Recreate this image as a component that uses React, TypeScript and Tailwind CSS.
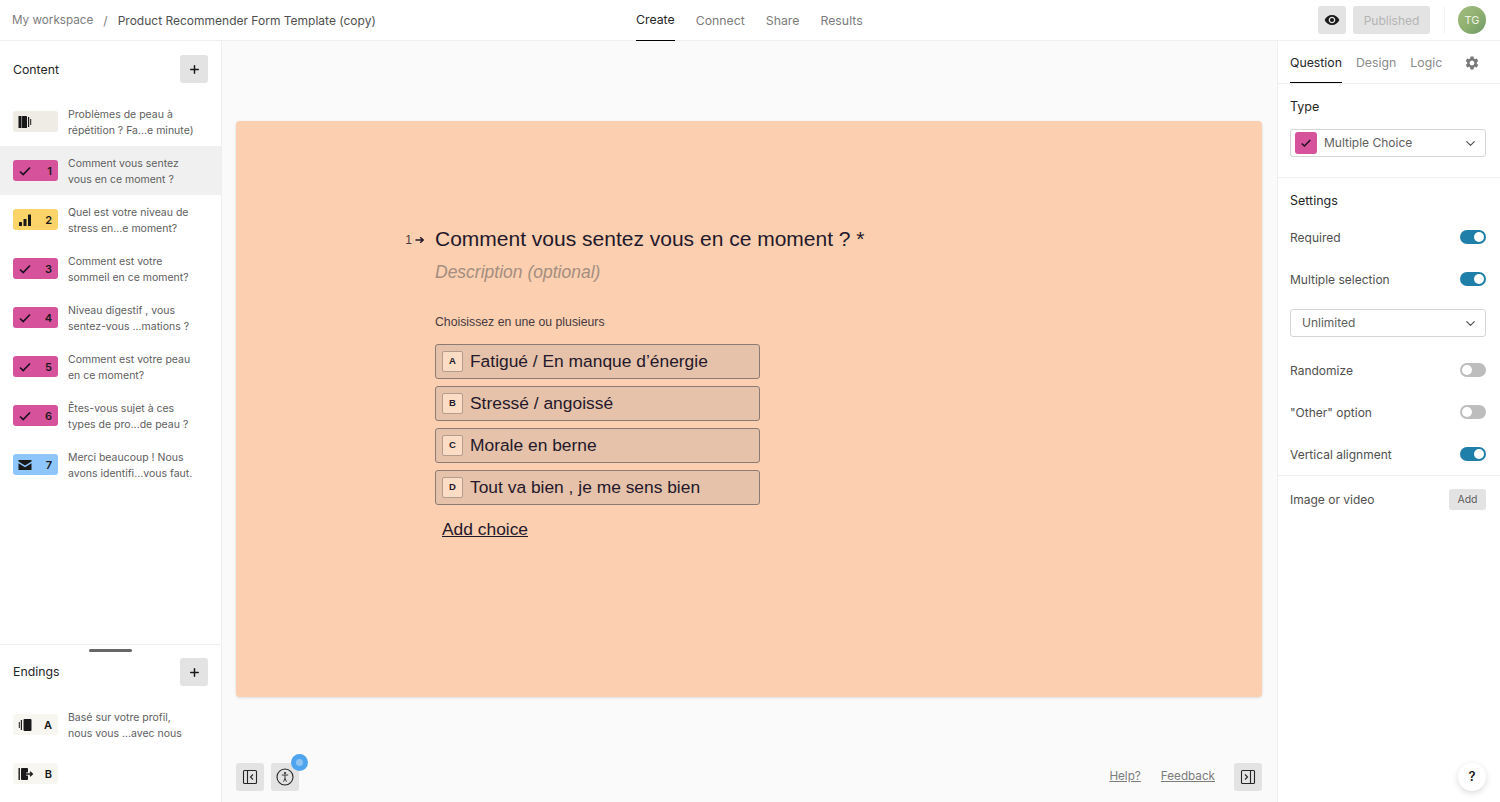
import React from "react";
import { ChevronDown, Plus } from "lucide-react";
import { MdSettings, MdVisibility } from "react-icons/md";

const CheckIcon = ({ className = "w-[14px] h-[14px]" }: { className?: string }) => (
  <svg viewBox="0 0 14 14" className={className} fill="none" stroke="#1c1020" strokeWidth="1.7">
    <path d="M2 7.5l3.2 3L12 3.5" />
  </svg>
);

const BarsIcon = () => (
  <svg viewBox="0 0 14 14" className="w-[14px] h-[14px]" fill="#191919">
    <rect x="1" y="9" width="3" height="4" rx="0.5" />
    <rect x="5.5" y="6" width="3" height="7" rx="0.5" />
    <rect x="10" y="1.5" width="3" height="11.5" rx="0.5" />
  </svg>
);

const MailIcon = () => (
  <svg viewBox="0 0 14 14" className="w-[14px] h-[14px]" fill="#191919">
    <path d="M0.5 2h13v1.4L7 7.4 0.5 3.4z" />
    <path d="M0.5 5.2L7 9.2l6.5-4V12h-13z" />
  </svg>
);

const WelcomeIcon = () => (
  <svg viewBox="0 0 14 14" className="w-[14px] h-[14px]" fill="#191919">
    <rect x="0.5" y="1" width="3" height="12" />
    <rect x="4" y="1" width="5" height="12" rx="0.6" />
    <rect x="10" y="2" width="1.2" height="10" />
    <rect x="12.2" y="4" width="1" height="6" />
  </svg>
);

const EndingAIcon = () => (
  <svg viewBox="0 0 14 14" className="w-[14px] h-[14px]" fill="#191919">
    <rect x="0.8" y="4" width="1" height="6" />
    <rect x="2.8" y="2" width="1.2" height="10" />
    <rect x="5.5" y="1" width="8" height="12" rx="1" />
  </svg>
);

const EndingBIcon = () => (
  <svg viewBox="0 0 16 14" className="w-[16px] h-[14px]" fill="#191919">
    <rect x="0.5" y="1" width="1.4" height="12" />
    <rect x="3" y="1" width="7" height="12" rx="1" />
    <path d="M8 7h6M12 4.8L14.4 7 12 9.2" fill="none" stroke="#f8f6f0" strokeWidth="3" />
    <path d="M8 7h6M12 4.8L14.4 7 12 9.2" fill="none" stroke="#191919" strokeWidth="1.3" />
  </svg>
);

const PanelLeftIcon = () => (
  <svg viewBox="0 0 16 16" className="w-4 h-4" fill="none" stroke="#262627" strokeWidth="1.1">
    <rect x="1.5" y="1.5" width="13" height="13" rx="1" />
    <path d="M5.5 1.5v13M11 5.5L8.5 8l2.5 2.5" />
  </svg>
);

const PanelRightIcon = () => (
  <svg viewBox="0 0 16 16" className="w-4 h-4" fill="none" stroke="#262627" strokeWidth="1.1">
    <rect x="1.5" y="1.5" width="13" height="13" rx="1" />
    <path d="M10.5 1.5v13M5 5.5L7.5 8 5 10.5" />
  </svg>
);

const AccessIcon = () => (
  <svg viewBox="0 0 18 18" className="w-[18px] h-[18px]" fill="none" stroke="#262627">
    <circle cx="9" cy="9" r="8" strokeWidth="1.1" />
    <circle cx="9" cy="5" r="1.1" fill="#262627" stroke="none" />
    <path d="M5.8 7h6.4M9 7v3.5M9 10.5l-1.5 3.2M9 10.5l1.5 3.2" strokeWidth="0.9" />
  </svg>
);

const ArrowIcon = () => (
  <svg viewBox="0 0 10 10" className="w-[10px] h-[10px]" fill="none" stroke="#24182b" strokeWidth="1.5">
    <path d="M0.5 5h7.5M5.2 2.2L8.2 5 5.2 7.8" />
  </svg>
);

const items = [
  { bg: "bg-[#efebe5]", icon: <WelcomeIcon />, num: "", text: ["Problèmes de peau à", "répétition ? Fa...e minute)"] },
  { bg: "bg-[#d6539b]", icon: <CheckIcon />, num: "1", text: ["Comment vous sentez", "vous en ce moment ?"], active: true },
  { bg: "bg-[#fdd46a]", icon: <BarsIcon />, num: "2", text: ["Quel est votre niveau de", "stress en...e moment?"] },
  { bg: "bg-[#d6539b]", icon: <CheckIcon />, num: "3", text: ["Comment est votre", "sommeil en ce moment?"] },
  { bg: "bg-[#d6539b]", icon: <CheckIcon />, num: "4", text: ["Niveau digestif , vous", "sentez-vous ...mations ?"] },
  { bg: "bg-[#d6539b]", icon: <CheckIcon />, num: "5", text: ["Comment est votre peau", "en ce moment?"] },
  { bg: "bg-[#d6539b]", icon: <CheckIcon />, num: "6", text: ["Êtes-vous sujet à ces", "types de pro...de peau ?"] },
  { bg: "bg-[#8ec5fb]", icon: <MailIcon />, num: "7", text: ["Merci beaucoup ! Nous", "avons identifi...vous faut."] },
];

const endings = [
  { icon: <EndingAIcon />, num: "A", text: ["Basé sur votre profil,", "nous vous ...avec nous"] },
  { icon: <EndingBIcon />, num: "B", text: [] as string[] },
];

const choices = [
  { key: "A", label: "Fatigué / En manque d’énergie" },
  { key: "B", label: "Stressé / angoissé" },
  { key: "C", label: "Morale en berne" },
  { key: "D", label: "Tout va bien , je me sens bien" },
];

const Row = ({ bg, icon, num, text, active }: { bg: string; icon: React.ReactNode; num: string; text: string[]; active?: boolean }) => (
  <div className={`flex items-center h-[49px] pl-[13px] pr-2 ${active ? "bg-[#f0f0f0]" : ""}`}>
    <div className={`flex items-center justify-between w-[45px] h-[21px] rounded-[3px] pl-[5px] pr-[6px] ${bg}`}>
      {icon}
      <span className="pt-px text-[11px] font-semibold text-[#191919]">{num}</span>
    </div>
    <div className="ml-[10px] pt-[2px] text-[10.5px] leading-4 text-[#5e5e5e]">
      {text.map((t) => (
        <div key={t}>{t}</div>
      ))}
    </div>
  </div>
);

const Toggle = ({ on }: { on?: boolean }) => (
  <div className={`flex items-center w-[26px] h-[14px] rounded-full px-[2px] ${on ? "bg-[#1f7fa9] justify-end" : "bg-[#bdbdbd] justify-start"}`}>
    <div className="w-[10px] h-[10px] rounded-full bg-white" />
  </div>
);

const Setting = ({ label, on }: { label: string; on?: boolean }) => (
  <div className="flex items-center justify-between h-[42px] text-[12px] text-[#4f4f4f]">
    <span className="pt-px">{label}</span>
    <Toggle on={on} />
  </div>
);

const IconBtn = ({ children }: { children: React.ReactNode }) => (
  <div className="flex items-center justify-center w-7 h-7 rounded-[3px] bg-[#e3e3e3]">{children}</div>
);

export default function App() {
  return (
    <div className="flex flex-col w-[1500px] h-[802px] overflow-hidden bg-white font-['Inter',sans-serif] text-[#262627]">
      {/* top bar */}
      <header className="flex items-center h-[41px] shrink-0 pl-3 pr-[14px] border-b border-[#efefef]">
        <div className="flex items-center w-[624px] pt-px text-[12px]">
          <span className="text-[11.7px] text-[#7c7c7c]">My workspace</span>
          <span className="mx-[10px] text-[#7c7c7c]">/</span>
          <span className="text-[#4f4f4f]">Product Recommender Form Template (copy)</span>
        </div>
        <nav className="flex gap-[21px] h-[41px] text-[12.3px] text-[#7c7c7c]">
          <span className="flex items-center pt-[2px] text-[#262627] border-b border-black">Create</span>
          <span className="flex items-center pt-[2px]">Connect</span>
          <span className="flex items-center pt-[2px]">Share</span>
          <span className="flex items-center pt-[2px]">Results</span>
        </nav>
        <div className="flex items-center ml-auto">
          <IconBtn>
            <MdVisibility size={16} color="#191919" />
          </IconBtn>
          <div className="flex items-center justify-center ml-[7px] w-[77px] h-7 pt-px rounded-[3px] bg-[#e3e3e3] text-[12px] text-[#b4b4b4]">Published</div>
          <div className="ml-[14px] w-px h-7 bg-[#f3f3f3]" />
          <div className="flex items-center justify-center ml-[13px] w-7 h-7 rounded-full bg-gradient-to-br from-[#a3bd7f] via-[#8fb070] to-[#6f9a66] text-[11px] text-[#eef3e6]">TG</div>
        </div>
      </header>

      <div className="flex flex-1 min-h-0">
        {/* left panel */}
        <aside className="flex flex-col w-[222px] shrink-0 border-r border-[#efefef]">
          <div className="flex-1 min-h-0">
            <div className="flex items-center justify-between h-[56px] pl-[13px] pr-[13px]">
              <span className="pt-[2px] text-[12.3px]">Content</span>
              <IconBtn>
                <Plus size={13} strokeWidth={2.7} color="#191919" />
              </IconBtn>
            </div>
            {items.map((it) => (
              <Row key={it.num + it.text[0]} {...it} />
            ))}
          </div>
          <div className="relative h-[158px] shrink-0 border-t border-[#efefef]">
            <div className="absolute left-[89px] top-[4px] w-[43px] h-[3px] rounded-full bg-[#666666]" />
            <div className="flex items-center justify-between h-[54px] mb-px pl-[13px] pr-[13px]">
              <span className="text-[12.3px]">Endings</span>
              <IconBtn>
                <Plus size={13} strokeWidth={2.7} color="#191919" />
              </IconBtn>
            </div>
            {endings.map((it) => (
              <Row key={it.num} bg="bg-[#f8f6f0]" {...it} />
            ))}
          </div>
        </aside>

        {/* canvas */}
        <main className="flex flex-col flex-1 min-w-0 bg-[#fafafa] pl-[14px] pr-[15px]">
          <div className="mt-[80px] h-[576px] rounded-[4px] bg-[#fbcfb0] shadow-[0_1px_3px_rgba(0,0,0,0.12)] pl-[167px] pt-[105px] font-['Liberation_Sans',sans-serif] text-[#24182b]">
            <div className="flex items-start">
              <div className="flex items-center justify-end w-[22px] h-[26px] pt-px text-[12px] text-[#4a3d42]">
                1
                <span className="ml-[3px]">
                  <ArrowIcon />
                </span>
              </div>
              <div className="ml-[10px]">
                <div className="text-[21px] leading-[26px]">Comment vous sentez vous en ce moment ? *</div>
                <div className="mt-[8px] text-[17.5px] leading-[24px] italic text-[#a58d7f]">Description (optional)</div>
                <div className="mt-[30px] text-[12.25px] leading-4 text-[#473a40]">Choisissez en une ou plusieurs</div>
                <div className="flex flex-col gap-[7px] mt-[14px] w-[325px]">
                  {choices.map((c) => (
                    <div key={c.key} className="flex items-center h-[35px] pl-[6px] rounded-[3px] border border-[#8c7a74] bg-[#e5c2a9]">
                      <div className="flex items-center justify-center w-[21px] h-[21px] rounded-[2px] border border-[#b29c8e] bg-[#fbdcc5] text-[9.5px] font-bold">{c.key}</div>
                      <span className="ml-[7px] text-[17.4px]">{c.label}</span>
                    </div>
                  ))}
                </div>
                <div className="mt-[12px] ml-[7px] text-[17.4px] leading-[24px] underline">Add choice</div>
              </div>
            </div>
          </div>
          <div className="flex items-center justify-between mt-auto mb-[11px]">
            <div className="flex gap-[7px]">
              <IconBtn>
                <PanelLeftIcon />
              </IconBtn>
              <div className="relative">
                <IconBtn>
                  <AccessIcon />
                </IconBtn>
                <div className="absolute -top-[9px] -right-[9px] flex items-center justify-center w-[17px] h-[17px] rounded-full bg-[#4ea4ee]">
                  <div className="w-[7px] h-[7px] rounded-full bg-[#8fc4f2]" />
                </div>
              </div>
            </div>
            <div className="flex items-center text-[11.7px] text-[#7c7c7c]">
              <span className="underline">Help?</span>
              <span className="ml-[20px] underline">Feedback</span>
              <div className="ml-[19px]">
                <IconBtn>
                  <PanelRightIcon />
                </IconBtn>
              </div>
            </div>
          </div>
        </main>

        {/* right panel */}
        <aside className="relative w-[223px] shrink-0 border-l border-[#efefef] text-[12px]">
          <div className="flex items-end h-[43px] pl-3 pr-[14px] text-[12.3px] border-b border-[#efefef]">
            <span className="flex items-center h-[41px] pt-[2px] border-b border-black text-[#262627]">Question</span>
            <span className="flex items-center h-[41px] pt-[2px] ml-[14px] text-[#8a8a8a]">Design</span>
            <span className="flex items-center h-[41px] pt-[2px] ml-[14px] text-[#8a8a8a]">Logic</span>
            <MdSettings size={16} color="#777777" className="ml-auto mr-[6px] mb-[12px]" />
          </div>
          <div className="h-[94px] pl-3 pr-[14px] border-b border-[#efefef]">
            <div className="pt-[15px] text-[12.5px] leading-4">Type</div>
            <div className="flex items-center h-7 mt-[14px] px-[4px] rounded-[3px] border border-[#d6d6d6] bg-white">
              <div className="flex items-center justify-center w-[22px] h-[22px] rounded-[3px] bg-[#d6539b]">
                <CheckIcon className="w-[12px] h-[12px]" />
              </div>
              <span className="ml-[7px] text-[#5e5e5e]">Multiple Choice</span>
              <ChevronDown size={15} color="#555555" className="ml-auto mr-[3px]" />
            </div>
          </div>
          <div className="h-[298px] pl-3 pr-[14px] pt-[14px] border-b border-[#efefef]">
            <div className="mb-[8px] pt-px h-4 text-[12.5px] leading-4">Settings</div>
            <Setting label="Required" on />
            <Setting label="Multiple selection" on />
            <div className="flex items-center h-7 mt-[9px] pl-[11px] rounded-[3px] border border-[#d6d6d6] text-[#5e5e5e]">
              Unlimited
              <ChevronDown size={15} color="#555555" className="ml-auto mr-[7px]" />
            </div>
            <div className="mt-[12px]">
              <Setting label="Randomize" />
              <Setting label={'"Other" option'} />
              <Setting label="Vertical alignment" on />
            </div>
          </div>
          <div className="flex items-center justify-between h-[46px] pl-3 pr-[14px] text-[#4f4f4f]">
            <span className="pt-px">Image or video</span>
            <div className="flex items-center justify-center w-[37px] h-[21px] pt-px rounded-[3px] bg-[#e3e3e3] text-[10.5px] text-[#5e5e5e]">Add</div>
          </div>
          <div className="absolute right-[14px] bottom-[11px] flex items-center justify-center w-7 h-7 rounded-full bg-white shadow-[0_2px_6px_rgba(0,0,0,0.15)] text-[13px] font-semibold text-[#191919]">?</div>
        </aside>
      </div>
    </div>
  );
}
